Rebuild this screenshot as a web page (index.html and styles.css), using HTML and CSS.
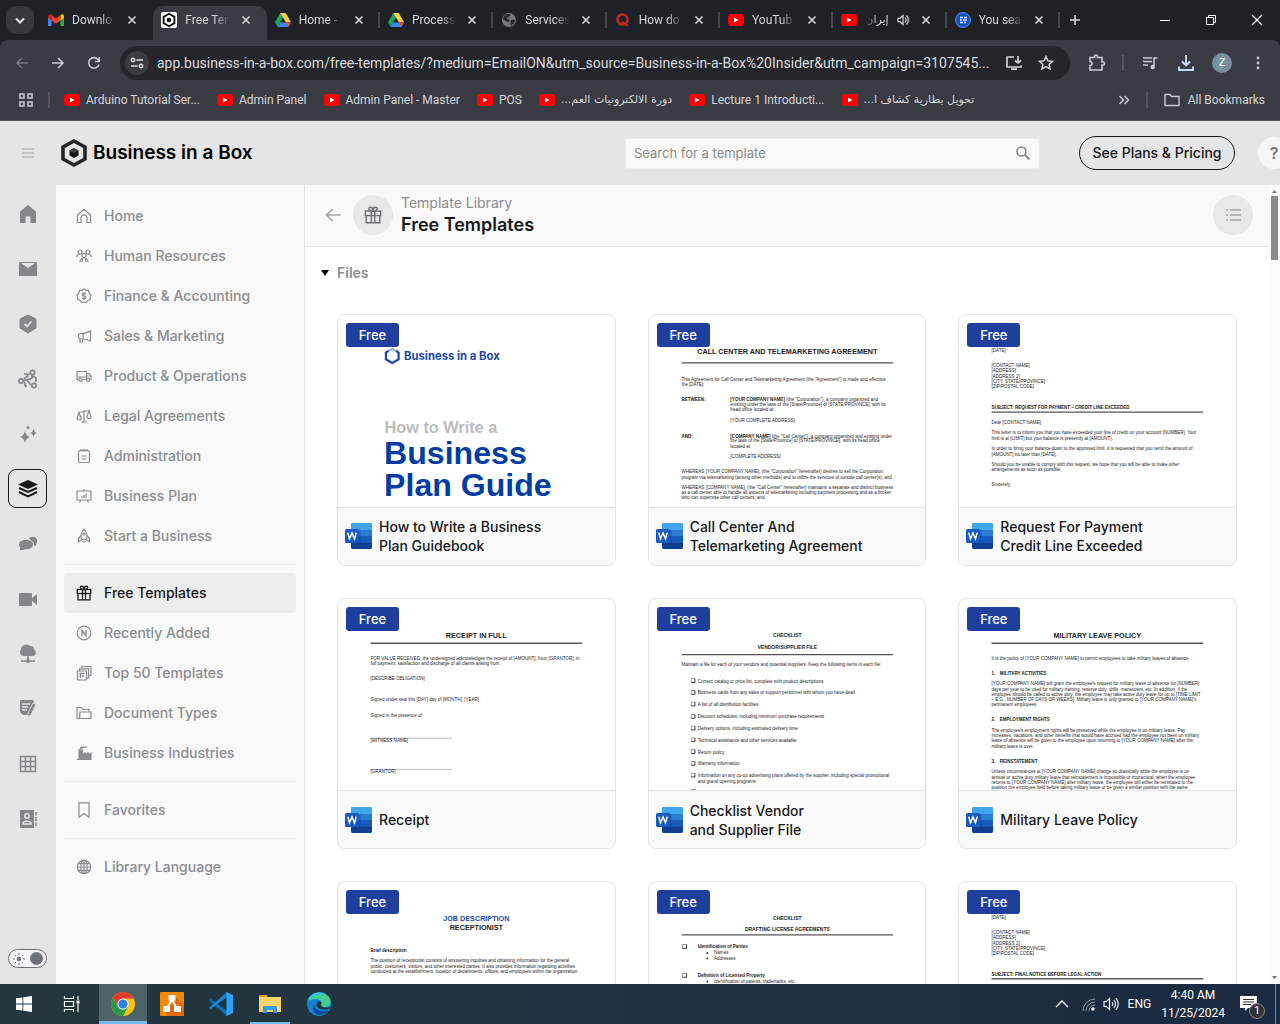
FILE: index.html
```html
<!DOCTYPE html>
<html lang="en">
<head>
<meta charset="utf-8">
<title>Free Templates</title>
<link rel="stylesheet" href="styles.css">
</head>
<body>
<svg class="sprite" aria-hidden="true">
  <symbol id="yt" viewBox="0 0 16 12"><rect width="16" height="12" rx="3" fill="#f00"/><path d="M6 3.500v5L10.500 6z" fill="#fff"/></symbol>
  <symbol id="drive" viewBox="0 0 16 14"><path d="M5.300 0h5.400L5.400 9 2.700 14 0 9.300z" fill="#1ea362"/><path d="M5.300 0h5.400L16 9.300h-5.300z" fill="#ffcd40"/><path d="M5.200 9.300H16L13.400 14H2.700z" fill="#4285f4"/><path d="M10.700 9.300H16L13.400 14z" fill="#ea4335"/><path d="M8 4.800 5.300 9.300h5.400z" fill="#1f2228"/></symbol>
  <symbol id="close" viewBox="0 0 10 10"><path d="m1.500 1.500 7 7m0-7-7 7" stroke="#d5d7db" stroke-width="1.600"/></symbol>
  <symbol id="gift" viewBox="0 0 16 16"><g fill="none" stroke="currentColor" stroke-width="1.300"><rect x="1.200" y="4.500" width="13.600" height="4"/><path d="M2 8.500v6.300h12V8.500M6.500 4.500v10.300m3-10.300v10.300M8 4.500C4 5 3.300 1.200 5.500 1.200 7.200 1.200 8 3 8 4.500 8 3 8.800 1.200 10.500 1.200c2.200 0 1.500 3.800-2.500 3.300z"/></g></symbol>
  <symbol id="word" viewBox="0 0 27 26"><rect x="6" width="21" height="26" rx="2" fill="#2b7cd3"/><path d="M8 0h17a2 2 0 0 1 2 2v5H6V2a2 2 0 0 1 2-2z" fill="#41a5ee"/><path d="M6 13h21v6.500H6z" fill="#185abd"/><path d="M6 19.500h21V24a2 2 0 0 1-2 2H8a2 2 0 0 1-2-2z" fill="#103f91"/><path d="M6 7h9.500v14.500H6z" fill="#0f3c85" opacity=".35"/><rect y="6" width="14" height="14" rx="1.500" fill="#185abd"/><path d="m2.700 9.600 1.800 6.200L7 10l2.500 5.800 1.800-6.200" fill="none" stroke="#fff" stroke-width="1.500"/></symbol>
  <symbol id="box" viewBox="0 0 9 9"><path d="M1 1h7v7H1z" fill="#fff" stroke="#333" stroke-width="1"/><path d="M1 8.200h7.200V1" fill="none" stroke="#333" stroke-width="1.600"/></symbol>
</svg>

<header class="browser">
  <div class="tabstrip">
    <button class="tab-search" aria-label="Search tabs"><svg width="10" height="7" viewBox="0 0 10 7"><path d="m1 1.500 4 4 4-4" fill="none" stroke="#e3e4e8" stroke-width="2"/></svg></button>
    <div class="tabs">
      <div class="tab"><svg width="16" height="12" viewBox="0 0 16 12"><path d="M0 1.500V12h3.600V5z" fill="#4285f4"/><path d="M16 1.500V12h-3.600V5z" fill="#34a853"/><path d="M0 1.500 1.500 0 3.600 1v5.500L0 4z" fill="#c5221f"/><path d="M16 1.500 14.500 0l-2.100 1v5.500L16 4z" fill="#fbbc04"/><path d="M3.600 1 8 4.400 12.400 1v5.400L8 9.700 3.600 6.400z" fill="#ea4335"/></svg><span class="tab-title">Downlo</span><button aria-label="Close tab"><svg width="10" height="10"><use href="#close"/></svg></button></div>
      <div class="tab active"><svg width="16" height="16" viewBox="0 0 16 16"><rect width="16" height="16" rx="2" fill="#fff"/><path d="m8 1.800 5.400 3.100v6.200L8 14.200l-5.400-3.100V4.900z" fill="none" stroke="#111" stroke-width="1.900"/><circle cx="8" cy="8" r="2.300"/></svg><span class="tab-title">Free Ten</span><button aria-label="Close tab"><svg width="10" height="10"><use href="#close"/></svg></button></div>
      <div class="tab plain"><svg width="16" height="14"><use href="#drive"/></svg><span class="tab-title">Home -</span><button aria-label="Close tab"><svg width="10" height="10"><use href="#close"/></svg></button></div>
      <div class="tab plain"><svg width="16" height="14"><use href="#drive"/></svg><span class="tab-title">Process</span><button aria-label="Close tab"><svg width="10" height="10"><use href="#close"/></svg></button></div>
      <div class="tab plain"><svg width="16" height="16" viewBox="0 0 16 16"><circle cx="8" cy="8" r="7" fill="#75777b"/><path d="M3 4c2-2 5-2.500 6-1.500S7 5 6 6s3 1 2.500 3S6 10 5 9 2 8 2 7zm7 4c2-1 3.500-.500 4 0s-.500 4-3 5-2-1-1.500-2 0-2 .500-3z" fill="#26292e"/></svg><span class="tab-title">Services</span><button aria-label="Close tab"><svg width="10" height="10"><use href="#close"/></svg></button></div>
      <div class="tab plain"><svg width="16" height="16" viewBox="0 0 16 16"><circle cx="7.500" cy="7.500" r="5" fill="none" stroke="#b92b27" stroke-width="2.600"/><path d="M7 10c2 0 3 4 6 3" fill="none" stroke="#b92b27" stroke-width="2"/></svg><span class="tab-title">How do</span><button aria-label="Close tab"><svg width="10" height="10"><use href="#close"/></svg></button></div>
      <div class="tab plain"><svg width="16" height="12"><use href="#yt"/></svg><span class="tab-title">YouTub</span><button aria-label="Close tab"><svg width="10" height="10"><use href="#close"/></svg></button></div>
      <div class="tab plain"><svg width="16" height="12"><use href="#yt"/></svg><span class="tab-title rtl" dir="rtl">إيران</span><svg width="13" height="12" viewBox="0 0 13 12"><path d="M1 4.300h2L6 1.500v9L3 7.700H1zM8 3.500q2 2.500 0 5M9.500 1.500q4 4.500 0 9" fill="none" stroke="#d5d7db" stroke-width="1.200"/></svg><button aria-label="Close tab"><svg width="10" height="10"><use href="#close"/></svg></button></div>
      <div class="tab plain"><svg width="16" height="16" viewBox="0 0 16 16"><circle cx="8" cy="8" r="7.500" fill="#1553b8" stroke="#4d8be0"/><path d="M5 5.500h3m1 0h3M5 8h2m1 0h4M5 10.500h3m1 0h2" stroke="#dfe9fa" stroke-width="1.600"/></svg><span class="tab-title">You sea</span><button aria-label="Close tab"><svg width="10" height="10"><use href="#close"/></svg></button></div>
    </div>
    <button class="new-tab" aria-label="New tab"><svg width="12" height="12"><path d="M6 1v10M1 6h10" stroke="#d5d7db" stroke-width="1.600"/></svg></button>
    <div class="window-controls">
      <button aria-label="Minimize"><svg width="12" height="12"><path d="M1 6.500h10" stroke="#fff"/></svg></button>
      <button aria-label="Restore"><svg width="12" height="12"><path d="M1.500 3.500h7v7h-7zM3.500 3.500v-2h7v7h-2" fill="none" stroke="#fff"/></svg></button>
      <button aria-label="Close window"><svg width="12" height="12"><path d="m1 1 10 10m0-10L1 11" stroke="#fff" stroke-width="1.200"/></svg></button>
    </div>
  </div>
  <div class="toolbar">
    <button aria-label="Back"><svg width="14" height="12"><path d="M13 6H2m5-5L2 6l5 5" fill="none" stroke="#75777d" stroke-width="1.600"/></svg></button>
    <button aria-label="Forward"><svg width="14" height="12"><path d="M1 6h11M7 1l5 5-5 5" fill="none" stroke="#c9cbd1" stroke-width="1.600"/></svg></button>
    <button aria-label="Reload"><svg width="14" height="14"><path d="M12 8.500A5.300 5.300 0 1 1 11 3.500l1.200 1.500M12.300 1v4.500H7.800" fill="none" stroke="#c9cbd1" stroke-width="1.600"/></svg></button>
    <div class="omnibox">
      <button class="site-info" aria-label="Site information"><svg width="14" height="12"><g fill="none" stroke="#dfe0e4" stroke-width="1.500"><circle cx="3" cy="3" r="1.700"/><path d="M6.500 3H13M1 9h6.500"/><circle cx="11" cy="9" r="1.700"/></g></svg></button>
      <input class="url" type="text" aria-label="Address" value="app.business-in-a-box.com/free-templates/?medium=EmailON&amp;utm_source=Business-in-a-Box%20Insider&amp;utm_campaign=3107545...">
      <button aria-label="Install app"><svg width="18" height="16"><path d="M9 2H2v10h14v-1.500M6 14.200h6M13 1v7m-3-2.500L13 8l3-2.500" fill="none" stroke="#cfd1d6" stroke-width="1.700"/></svg></button>
      <button aria-label="Bookmark this page"><svg width="16" height="16"><path d="m8 1.500 1.900 4.300 4.600.500-3.400 3.100 1 4.600L8 11.700 3.900 14l1-4.600L1.500 6.300l4.600-.500z" fill="none" stroke="#cfd1d6" stroke-width="1.500"/></svg></button>
    </div>
    <button class="extensions" aria-label="Extensions"><svg width="18" height="18"><path d="M2 3.500h4.500v-1a1.500 1.500 0 0 1 3 0v1H14V8h1a1.500 1.500 0 0 1 0 3h-1v5H2v-4.500a2 2 0 0 0 0-4z" fill="none" stroke="#c9cbd1" stroke-width="1.600"/></svg></button>
    <span class="rule"></span>
    <button aria-label="Media"><svg width="16" height="14"><path d="M1 2h9M1 5.500h9M1 9h5" stroke="#c9cbd1" stroke-width="1.600"/><path d="M12 11V2h3.500" fill="none" stroke="#c9cbd1" stroke-width="1.600"/><circle cx="10.600" cy="11" r="2.200" fill="#c9cbd1"/></svg></button>
    <button aria-label="Downloads"><svg width="18" height="18"><path d="M9 1v10M5 7.500l4 4 4-4M2 12.500V16h14v-3.500" fill="none" stroke="#c5dcff" stroke-width="1.900"/></svg></button>
    <button class="profile" aria-label="Profile"><span>Z</span></button>
    <button aria-label="Menu"><svg width="4" height="16"><g fill="#c9cbd1"><circle cx="2" cy="3" r="1.400"/><circle cx="2" cy="8" r="1.400"/><circle cx="2" cy="13" r="1.400"/></g></svg></button>
  </div>
  <nav class="bookmarks" aria-label="Bookmarks">
    <button class="apps" aria-label="Apps"><svg width="14" height="14"><path d="M1 1h4v4H1zM9 1h4v4H9zM1 9h4v4H1zM9 9h4v4H9z" fill="none" stroke="#c9cbd1" stroke-width="1.600"/></svg></button>
    <span class="rule"></span>
    <div class="bookmark-list">
      <a href="#"><svg width="16" height="12"><use href="#yt"/></svg>Arduino Tutorial Ser...</a>
      <a href="#"><svg width="16" height="12"><use href="#yt"/></svg>Admin Panel</a>
      <a href="#"><svg width="16" height="12"><use href="#yt"/></svg>Admin Panel - Master</a>
      <a href="#"><svg width="16" height="12"><use href="#yt"/></svg>POS</a>
      <a href="#"><svg width="16" height="12"><use href="#yt"/></svg><span class="rtl" dir="rtl">دورة الالكترونيات العم...</span></a>
      <a href="#"><svg width="16" height="12"><use href="#yt"/></svg>Lecture 1 Introducti...</a>
      <a href="#"><svg width="16" height="12"><use href="#yt"/></svg><span class="rtl" dir="rtl">تحويل بطارية كشاف ا...</span></a>
    </div>
    <button class="more" aria-label="More bookmarks"><svg width="12" height="10"><path d="m1.500 1 4 4-4 4m5-8 4 4-4 4" fill="none" stroke="#c9cbd1" stroke-width="1.500"/></svg></button>
    <span class="rule"></span>
    <a class="all" href="#"><svg width="16" height="14"><path d="M1 12.500v-11h5l1.500 2H15v9z" fill="none" stroke="#c9cbd1" stroke-width="1.400"/></svg>All Bookmarks</a>
  </nav>
</header>

<div class="topbar">
  <button class="burger" aria-label="Toggle menu"><svg width="12" height="12"><path d="M0 2h12M0 6h12M0 10h12" stroke="#bcbcbc" stroke-width="1.600"/></svg></button>
  <a class="brand" href="#"><svg width="28" height="30" viewBox="0 0 28 30"><path d="m14 3 11 6v12L14 27 3 21V9z" fill="none" stroke="#262626" stroke-width="3.600"/><path d="m14 10 4.500 2.500v5L14 20l-4.500-2.500v-5z" fill="#151515"/><path d="m14 10 4.500 2.500L14 15l-4.500-2.500z" fill="#444"/></svg>Business in a Box</a>
  <form class="search"><input type="text" aria-label="Search for a template" placeholder="Search for a template"><button type="button" aria-label="Search"><svg width="16" height="16"><circle cx="6.500" cy="6.500" r="4.500" fill="none" stroke="#858585" stroke-width="1.600"/><path d="m10 10 4.500 4.500" stroke="#858585" stroke-width="1.800"/></svg></button></form>
  <button class="plans">See Plans &amp; Pricing</button>
  <button class="help">?</button>
</div>

<div class="app">
  <nav class="rail" aria-label="Apps">
    <a href="#" aria-label="Home"><svg width="18" height="18"><path d="M9 0 1 6.500V18h5.500v-6.500h5V18H17V6.500z" fill="currentColor"/></svg></a>
    <a href="#" aria-label="Mail"><svg width="20" height="16"><path d="M1 1h18v14H1z" fill="currentColor"/><path d="m3 2 7 5 7-5z" fill="#e5e5e5"/></svg></a>
    <a href="#" aria-label="Tasks"><svg width="18" height="20"><path d="m9 1 8 4v9l-8 5-8-5V5z" fill="currentColor" stroke="currentColor" stroke-linejoin="round"/><path d="m5.500 10 2.500 2.500 4.500-5" fill="none" stroke="#e5e5e5" stroke-width="1.800"/></svg></a>
    <a href="#" aria-label="Workflows"><svg width="20" height="20"><g fill="none" stroke="currentColor" stroke-width="1.700"><circle cx="14.500" cy="3.500" r="2.200"/><circle cx="3" cy="12" r="2.200"/><circle cx="16" cy="16.500" r="2.200"/><path d="M12 5Q9 6 6 4.500M10 6.500q-1 2-4 3M5.500 12q3-2 5 1t3.500 3M18 13V9l-3-2M7 13q-1 3 1.500 5M14 6v3q-3 2-5 1"/></g></svg></a>
    <a href="#" aria-label="AI"><svg width="18" height="18"><path d="M6 6q1 5 5 6-4 1-5 6-1-5-5-6 4-1 5-6zM14.500 4q.500 3 3.500 4-3 .500-3.500 4-.500-3.500-3.500-4 3-1 3.500-4zM9 0q.300 2 2 2.500Q9.300 3 9 5q-.300-2-2-2.500Q8.700 2 9 0z" fill="currentColor"/></svg></a>
    <a class="current" href="#" aria-label="Templates"><svg width="20" height="18"><path d="m10 0 10 4.500L10 9 0 4.500z" fill="currentColor"/><path d="m1 8 9 4 9-4M1 12l9 4.300 9-4.300" fill="none" stroke="currentColor" stroke-width="2"/></svg></a>
    <a href="#" aria-label="Chat"><svg width="20" height="16"><path d="M11 2c5-3 9 0 8 4-.300 1.200-1 2-1 4l-3-1z" fill="currentColor"/><ellipse cx="8" cy="8.500" rx="7.500" ry="5.300" fill="currentColor" stroke="#e5e5e5"/><path d="M2 10v4.500l5-1z" fill="currentColor"/></svg></a>
    <a href="#" aria-label="Meetings"><svg width="20" height="14"><rect y="1" x="1" width="13" height="13" rx="1" fill="currentColor"/><path d="m13 7 6-5v11l-6-5z" fill="currentColor"/></svg></a>
    <a href="#" aria-label="Drive"><svg width="18" height="20"><path d="M4 12a4 4 0 0 1-2-6.500C2.500 0 9 0 11 2c3 0 4 1 4 3.500 3 1.500 2 6.500-1.500 6.500z" fill="currentColor"/><path d="M9 11v6M2 17h14" stroke="currentColor" stroke-width="1.700"/><circle cx="9" cy="17" r="2" fill="currentColor"/></svg></a>
    <a href="#" aria-label="Documents"><svg width="18" height="20"><path d="M1 1h13l1 2-5 13H4l-3-3z" fill="currentColor"/><path d="M3 5h8M3 8h6M3 11h5" stroke="#e5e5e5" stroke-width="1.300"/><path d="m14 4-5 10v4l3-2 5-11z" fill="currentColor" stroke="#e5e5e5" stroke-width=".8"/></svg></a>
    <a href="#" aria-label="Sheets"><svg width="18" height="18"><path d="M1.500 1.500h15v15h-15zM6.500 1.500v15m5-15v15M1.500 6.500h15m-15 5h15" fill="none" stroke="currentColor" stroke-width="1.500"/></svg></a>
    <a href="#" aria-label="Contacts"><svg width="18" height="18"><path d="M1 0h14v18H1z" fill="currentColor"/><circle cx="8" cy="6" r="2.200" fill="none" stroke="#e5e5e5" stroke-width="1.500"/><path d="M4 14v-1.500q4-3 8 0V14z" fill="none" stroke="#e5e5e5" stroke-width="1.500"/><path d="M17 2v3.500M17 7v4m0 1.500V16" stroke="currentColor" stroke-width="1.500"/></svg></a>
    <button class="theme" aria-label="Theme"><svg width="12" height="12"><circle cx="6" cy="6" r="2.300" fill="#6d7278"/><path d="M6 0v2m0 8v2M0 6h2m8 0h2M2 2l1 1m6 6 1 1M2 10l1-1m6-6 1-1" stroke="#6d7278"/></svg><span></span></button>
  </nav>

  <nav class="sidebar" aria-label="Template categories">
    <a href="#"><svg width="16" height="16"><path d="M1.500 7 8 1.300 14.500 7v7.500H11V9.800a3 3 0 0 0-6 0v4.700H1.500z"/></svg>Home</a>
    <a href="#"><svg width="16" height="16"><circle cx="4" cy="4" r="2"/><circle cx="12" cy="4" r="2"/><circle cx="8" cy="7.500" r="2.200"/><path d="M.8 9q0-2.500 3-3M15.200 9q0-2.500-3-3M4 14q.500-4 4-4.300 3.500.300 4 4.300M6.500 11 6 14m3.500-3 .500 3"/></svg>Human Resources</a>
    <a href="#"><svg width="16" height="16"><path d="m8 .9 2 1.400 2.500.200.500 2.400L15 7l-.900 2.200L14 11.500l-2.200 1L10 14.600l-2-.6-2 .6-1.800-2.100-2.300-1-.100-2.300L1 7l2-2.100.500-2.400L6 2.300z"/><path d="M10 6Q9.500 5 8 5 6 5 6 6.400q0 1.300 2 1.400t2 1.500q0 1.500-2 1.500-1.600 0-2-1.200M8 4v8"/></svg>Finance &amp; Accounting</a>
    <a href="#"><svg width="16" height="16"><path d="M14.500 2v11.500M14.500 2.500Q11 5.500 6 5.500H4a3 3 0 0 0 0 5.500h2q5 0 8.500 2.300M7 5.500V11M4 11v3h2.500l.300-2.700"/></svg>Sales &amp; Marketing</a>
    <a href="#"><svg width="16" height="16"><path d="M3 11.500H1v-8h9.500v8H6M10.500 5.500H13L15 8v3.500h-1M10.500 8H15M1 9h9"/><circle cx="4.500" cy="11.800" r="1.600"/><circle cx="12" cy="11.800" r="1.600"/></svg>Product &amp; Operations</a>
    <a href="#"><svg width="16" height="16"><path d="M8 2v12M5 14h6M3 4.500 8 3.500l5-1M3 4.500.900 10.500a2.300 2.300 0 0 0 4.300 0zM13 2.800 10.800 9a2.300 2.300 0 0 0 4.300 0z"/></svg>Legal Agreements</a>
    <a href="#"><svg width="16" height="16"><rect x="2.500" y="2.500" width="11" height="12" rx="1.500"/><path d="M5 1v2.500M7 1v2.500M9 1v2.500m2-2.500v2.500M5.500 8h5m-5 3h5"/></svg>Administration</a>
    <a href="#"><svg width="16" height="16"><path d="M1 3h14v9H1zM8 1v2M5 12l-1.500 2.500M11 12l1.500 2.500M6 10V8m2 2V7m2 3V5.500"/></svg>Business Plan</a>
    <a href="#"><svg width="16" height="16"><path d="M5.500 11.500Q4 5 8 1.200 12 5 10.500 11.500zM5 7.500 2.500 10.500V14L5.500 12m5.500-4.500 2.500 3V14l-3-2M8 13v2m-1.500-2v1m3-1v1"/><circle cx="8" cy="6" r="1"/></svg>Start a Business</a>
    <hr>
    <a class="selected" href="#"><svg width="16" height="16"><use href="#gift"/></svg>Free Templates</a>
    <a href="#"><svg width="16" height="16"><circle cx="8" cy="8" r="6.800"/><path d="M6 11V5.500l4 5V5" stroke-width="1.500"/></svg>Recently Added</a>
    <a href="#"><svg width="16" height="16"><path d="M1.500 6h9v9h-9zM3.500 6V3.800h9.200v9h-2M6 3.500V1.500h9v9h-2"/><path d="M3.500 8.500h5M4.500 9v4M6 11h2" stroke-width="1.600"/></svg>Top 50 Templates</a>
    <a href="#"><svg width="16" height="16"><path d="M3.500 13.500H1v-11h4.500l1.500 2h6V7M4 7h11v6.500H3.500z"/></svg>Document Types</a>
    <a href="#"><svg width="16" height="16"><path d="M1 14.500h14V8l-3 2V8L9 10V8L6.500 9.500V5H3v9zM4 4.500Q4 2 7 2h4" fill="currentColor"/></svg>Business Industries</a>
    <hr>
    <a href="#"><svg width="16" height="16"><path d="M3 .8h10v14.500L8 11.500l-5 3.800z"/></svg>Favorites</a>
    <hr>
    <a href="#"><svg width="16" height="16"><circle cx="8" cy="8" r="6.700"/><ellipse cx="8" cy="8" rx="3.200" ry="6.700"/><path d="M8 1.300v13.400M1.300 8h13.400M2.300 4.700h11.400M2.300 11.300h11.400"/></svg>Library Language</a>
  </nav>

  <main class="content">
    <div class="page-head">
      <button class="back" aria-label="Back"><svg width="16" height="14"><path d="M15.500 7H1.500m6-6-6 6 6 6" fill="none" stroke="#a3a3a3" stroke-width="1.600"/></svg></button>
      <span class="round"><svg width="18" height="18"><use href="#gift"/></svg></span>
      <div class="titles"><p>Template Library</p><h1>Free Templates</h1></div>
      <button class="round view" aria-label="List view"><svg width="16" height="14"><path d="M5 2h11M5 7h11M5 12h11M1 2h2M1 7h2m-2 5h2" stroke="#a3a3a3" stroke-width="1.500"/></svg></button>
    </div>
    <details class="files" open>
      <summary><svg width="8" height="6"><path d="M0 0h8L4 6z"/></svg>Files</summary>
      <div class="cards">
        <article class="card">
          <svg class="preview" viewBox="0 0 612 424"><path d="M112 79 106 83v15l14 8 14-8V83l-6-4" fill="none" stroke="#1d4aa5" stroke-width="5"/><path d="m112 79 8-4 8 4" fill="none" stroke="#9db8e0" stroke-width="5"/><g font-weight="bold" fill="#003da5"><text class="wordmark" x="146" y="99">Business in a Box</text><text x="103" y="260" font-size="36" fill="#bdbdbd">How to Write a</text><text x="102" y="329" font-size="71">Business</text><text x="102" y="401" font-size="71">Plan Guide</text></g></svg>
          <span class="badge">Free</span>
          <a class="caption" href="#"><svg width="27" height="26"><use href="#word"/></svg><span>How to Write a Business<br>Plan Guidebook</span></a>
        </article>
        <article class="card">
          <svg class="preview" viewBox="0 0 612 424"><text class="title" x="306" y="86">CALL CENTER AND TELEMARKETING AGREEMENT</text><path class="line" d="M72 106h468"/>
            <text x="72" y="145">This Agreement for Call Center and Telemarketing Agreement (the "Agreement") is made and effective</text><text x="72" y="156">the [DATE]</text>
            <text class="b" x="72" y="190">BETWEEN:</text><text x="180" y="190"><tspan class="b">[YOUR COMPANY NAME]</tspan> (the "Corporation"), a company organized and</text><text x="180" y="202">existing under the laws of the [State/Province] of [STATE/PROVINCE], with its</text><text x="180" y="213">head office located at:</text><text x="180" y="236">[YOUR COMPLETE ADDRESS]</text>
            <text class="b" x="72" y="271">AND:</text><text x="180" y="271"><tspan class="b">[COMPANY NAME]</tspan> (the "Call Center"), a company organized and existing under</text><text x="180" y="282">the laws of the [State/Province] of [STATE/PROVINCE], with its head office</text><text x="180" y="294">located at:</text><text x="180" y="316">[COMPLETE ADDRESS]</text>
            <text x="72" y="350">WHEREAS [YOUR COMPANY NAME], (the "Corporation" hereinafter) desires to sell the Corporation</text><text x="72" y="362">program via telemarketing (among other methods) and to utilize the services of outside call center(s); and</text>
            <text x="72" y="385">WHEREAS [COMPANY NAME], (the "Call Center" hereinafter) maintains a separate and distinct business</text><text x="72" y="397">as a call center able to handle all aspects of telemarketing including payment processing and as a broker</text><text x="72" y="408">who can supervise other call centers; and</text></svg>
          <span class="badge">Free</span>
          <a class="caption" href="#"><svg width="27" height="26"><use href="#word"/></svg><span>Call Center And<br>Telemarketing Agreement</span></a>
        </article>
        <article class="card">
          <svg class="preview" viewBox="0 0 612 424"><text x="72" y="81">[DATE]</text><text x="72" y="116">[CONTACT NAME]</text><text x="72" y="127">[ADDRESS]</text><text x="72" y="139">[ADDRESS 2]</text><text x="72" y="150">[CITY, STATE/PROVINCE]</text><text x="72" y="162">[ZIP/POSTAL CODE]</text>
            <text class="b" x="72" y="207">SUBJECT: REQUEST FOR PAYMENT – CREDIT LINE EXCEEDED</text><path class="line" d="M72 215h468"/>
            <text x="72" y="241">Dear [CONTACT NAME],</text><text x="72" y="264">This letter is to inform you that you have exceeded your line of credit on your account [NUMBER]. Your</text><text x="72" y="276">limit is at [LIMIT] but your balance is presently at [AMOUNT].</text>
            <text x="72" y="299">In order to bring your balance down to the approved limit, it is requested that you remit the amount of</text><text x="72" y="311">[AMOUNT] no later than [DATE].</text>
            <text x="72" y="333">Should you be unable to comply with this request, we hope that you will be able to make other</text><text x="72" y="345">arrangements as soon as possible.</text><text x="72" y="379">Sincerely,</text></svg>
          <span class="badge">Free</span>
          <a class="caption" href="#"><svg width="27" height="26"><use href="#word"/></svg><span>Request For Payment<br>Credit Line Exceeded</span></a>
        </article>
        <article class="card">
          <svg class="preview" viewBox="0 0 612 424"><text class="title" x="306" y="87">RECEIPT IN FULL</text><path class="line" d="M72 98h468"/>
            <text x="72" y="134">FOR VALUE RECEIVED, the undersigned acknowledges the receipt of [AMOUNT], from [GRANTOR], in</text><text x="72" y="146">full payment, satisfaction and discharge of all claims arising from:</text><text x="72" y="180">[DESCRIBE OBLIGATION]</text><text x="72" y="226">Signed under seal this [DAY] day of [MONTH], [YEAR].</text><text x="72" y="260">Signed in the presence of:</text>
            <path class="sign" d="M72 308h180M72 377h180"/><text x="72" y="317">[WITNESS NAME]</text><text x="72" y="386">[GRANTOR]</text></svg>
          <span class="badge">Free</span>
          <a class="caption" href="#"><svg width="27" height="26"><use href="#word"/></svg><span>Receipt</span></a>
        </article>
        <article class="card">
          <svg class="preview" viewBox="0 0 612 424"><text class="subtitle" x="306" y="83">CHECKLIST</text><text class="subtitle" x="306" y="110">VENDOR/SUPPLIER FILE</text><path class="line" d="M72 123h468"/>
            <text x="72" y="148">Maintain a file for each of your vendors and potential suppliers. Keep the following items in each file:</text>
            <g><use href="#box" x="92" y="175" width="11" height="11"/><use href="#box" x="92" y="201" width="11" height="11"/><use href="#box" x="92" y="227" width="11" height="11"/><use href="#box" x="92" y="254" width="11" height="11"/><use href="#box" x="92" y="280" width="11" height="11"/><use href="#box" x="92" y="306" width="11" height="11"/><use href="#box" x="92" y="332" width="11" height="11"/><use href="#box" x="92" y="358" width="11" height="11"/><use href="#box" x="92" y="384" width="11" height="11"/><use href="#box" x="92" y="420" width="11" height="11"/></g>
            <text x="108" y="185">Current catalog or price list, complete with product descriptions</text><text x="108" y="211">Business cards from any sales or support personnel with whom you have dealt</text><text x="108" y="237">A list of all distribution facilities</text><text x="108" y="263">Discount schedules, including minimum purchase requirements</text><text x="108" y="290">Delivery options, including estimated delivery time</text><text x="108" y="316">Technical assistance and other services available</text><text x="108" y="342">Return policy</text><text x="108" y="368">Warranty information</text><text x="108" y="394">Information on any co-op advertising plans offered by the supplier, including special promotional</text><text x="108" y="406">and grand opening programs</text></svg>
          <span class="badge">Free</span>
          <a class="caption" href="#"><svg width="27" height="26"><use href="#word"/></svg><span>Checklist Vendor<br>and Supplier File</span></a>
        </article>
        <article class="card">
          <svg class="preview" viewBox="0 0 612 424"><text class="title" x="306" y="87">MILITARY LEAVE POLICY</text><path class="line" d="M72 98h468"/>
            <text x="72" y="134">It is the policy of [YOUR COMPANY NAME] to permit employees to take military leaves of absence.</text>
            <text class="b" x="72" y="169">1.</text><text class="b" x="90" y="169">MILITARY ACTIVITIES</text>
            <text x="72" y="191">[YOUR COMPANY NAME] will grant the employee's request for military leave of absence for [NUMBER]</text><text x="72" y="203">days per year to be used for military training, reserve duty, drills, maneuvers, etc. In addition, if the</text><text x="72" y="214">employee should be called to active duty, the employee may take active duty leave for up to [TIME LIMIT</text><text x="72" y="226">– E.G., NUMBER OF DAYS OR WEEKS]. Military leave is only granted to [YOUR COMPANY NAME]'s</text><text x="72" y="237">permanent employees.</text>
            <text class="b" x="72" y="271">2.</text><text class="b" x="90" y="271">EMPLOYMENT RIGHTS</text>
            <text x="72" y="294">The employee's employment rights will be preserved while the employee is on military leave. Pay</text><text x="72" y="306">increases, vacations, and other benefits that would have accrued had the employee not been on military</text><text x="72" y="317">leave of absence will be given to the employee upon returning to [YOUR COMPANY NAME] after the</text><text x="72" y="329">military leave is over.</text>
            <text class="b" x="72" y="363">3.</text><text class="b" x="90" y="363">REINSTATEMENT</text>
            <text x="72" y="386">Unless circumstances at [YOUR COMPANY NAME] change so drastically while the employee is on</text><text x="72" y="398">annual or active duty military leave that reinstatement is impossible or impractical, when the employee</text><text x="72" y="409">returns to [YOUR COMPANY NAME] after military leave, the employee will either be reinstated to the</text><text x="72" y="420">position the employee held before taking military leave or be given a similar position with the same</text></svg>
          <span class="badge">Free</span>
          <a class="caption" href="#"><svg width="27" height="26"><use href="#word"/></svg><span>Military Leave Policy</span></a>
        </article>
        <article class="card">
          <svg class="preview" viewBox="0 0 612 424"><text class="title blue" x="306" y="87">JOB DESCRIPTION</text><text class="title" x="306" y="107">RECEPTIONIST</text>
            <text class="b" x="72" y="154">Brief description</text><text x="72" y="178">The position of receptionist consists of answering inquiries and obtaining information for the general</text><text x="72" y="190">public, customers, visitors, and other interested parties. It also provides information regarding activities</text><text x="72" y="201">conducted at the establishment, location of departments, offices, and employees within the organization.</text></svg>
          <span class="badge">Free</span>
          <a class="caption" href="#"><svg width="27" height="26"><use href="#word"/></svg><span>Receptionist</span></a>
        </article>
        <article class="card">
          <svg class="preview" viewBox="0 0 612 424"><text class="subtitle" x="306" y="83">CHECKLIST</text><text class="subtitle" x="306" y="108">DRAFTING LICENSE AGREEMENTS</text><path class="line" d="M72 117h468"/>
            <use href="#box" x="73" y="137" width="11" height="11"/><text class="b" x="108" y="147">Identification of Parties</text><circle cx="129" cy="157" r="2"/><text x="144" y="160">Names</text><circle cx="129" cy="169" r="2"/><text x="144" y="172">Addresses</text>
            <use href="#box" x="73" y="201" width="11" height="11"/><text class="b" x="108" y="211">Definition of Licensed Property</text><circle cx="129" cy="220" r="2"/><text x="144" y="223">Identification of patents, trademarks, etc.</text></svg>
          <span class="badge">Free</span>
          <a class="caption" href="#"><svg width="27" height="26"><use href="#word"/></svg><span>Checklist Drafting<br>License Agreements</span></a>
        </article>
        <article class="card">
          <svg class="preview" viewBox="0 0 612 424"><text x="72" y="81">[DATE]</text><text x="72" y="116">[CONTACT NAME]</text><text x="72" y="127">[ADDRESS]</text><text x="72" y="139">[ADDRESS 2]</text><text x="72" y="150">[CITY, STATE/PROVINCE]</text><text x="72" y="162">[ZIP/POSTAL CODE]</text><text class="b" x="72" y="207">SUBJECT: FINAL NOTICE BEFORE LEGAL ACTION</text><path class="line" d="M72 214h468"/></svg>
          <span class="badge">Free</span>
          <a class="caption" href="#"><svg width="27" height="26"><use href="#word"/></svg><span>Final Notice Before<br>Legal Action</span></a>
        </article>
      </div>
    </details>
  </main>
  <div class="scroll"><svg width="5" height="3"><path d="M0 3h5L2.500 0z"/></svg><span></span><svg width="5" height="3"><path d="M0 0h5L2.500 3z"/></svg></div>
</div>

<footer class="taskbar">
  <button aria-label="Start"><svg width="16" height="16" viewBox="0 0 16 16"><path d="m0 2.300 6.500-.900v6.100H0zM7.300 1.300 16 0v7.500H7.300zM0 8.400h6.500v6.200L0 13.700zM7.300 8.400H16V16l-8.700-1.300z" fill="#fff"/></svg></button>
  <button aria-label="Task view"><svg width="18" height="16"><path d="M1.500 0v2.500h9V0M1.500 16v-2.500h9V16M1.500 5.500h9v5h-9zM15 0v4m0 4v8" fill="none" stroke="#fff" stroke-width="1.200"/><path d="M13.500 4.500h3v3h-3z" fill="#fff"/></svg></button>
  <div class="pinned">
    <button class="focused" aria-label="Chrome"><svg width="24" height="24" viewBox="0 0 24 24"><circle cx="12" cy="12" r="12" fill="#fbc116"/><path d="M1.600 6A12 12 0 0 1 22.400 6L22.400 6.500H12L7.200 14.800z" fill="#e33b2e"/><path d="M1.600 6A12 12 0 0 0 12 24l5-9-9.800-.200z" fill="#279b48"/><circle cx="12" cy="12" r="5.600" fill="#fff"/><circle cx="12" cy="12" r="4.500" fill="#2a7de9"/></svg></button>
    <button aria-label="draw.io"><svg width="24" height="24"><rect width="24" height="24" rx="1" fill="#f08705"/><path d="m15 4 9 9v11H8l-3-5z" fill="#df6c0c"/><path d="m12 8-5 8m5-8 5 8" stroke="#fff" stroke-width="2"/><g fill="#fff"><rect x="8.500" y="3" width="7" height="6" rx="1"/><rect x="3" y="14" width="7" height="6" rx="1"/><rect x="14" y="14" width="7" height="6" rx="1"/></g></svg></button>
    <button aria-label="VS Code"><svg width="24" height="24"><path d="M0 8.500 1.800 7 18 19v5z" fill="#0a74c0"/><path d="M0 15.500 1.800 17 18 5V0z" fill="#1583d3"/><path d="m17.500 0 6.500 3v18l-6.500 3z" fill="#2aa5f5"/></svg></button>
    <button class="running" aria-label="File Explorer"><svg width="22" height="20"><path d="M0 1h8l1 3H0z" fill="#d99e12"/><path d="M0 3h22v15H0z" fill="#fbd368"/><path d="M4 19v-7h14v7h-4v-3H8v3z" fill="#3b9be0"/></svg></button>
    <button aria-label="Edge"><svg width="24" height="24"><circle cx="12" cy="12" r="12" fill="#1583cf"/><path d="M1 9C3 1 14-3 21 4c4 4 3 10-1 11-3 1-6 0-6-2 2-3-1-6-5-6S2 8 1 9z" fill="#42cf8f"/><path d="M.500 9C3 1 14-2 19 3 12 1 4 4 .500 9z" fill="#3cc3e8"/><path d="M8 12c-1 6 6 9 14 6-4 6-12 7-15 2-2-3-1-6 1-8z" fill="#0c4f9e"/><path d="M10 11c-2 4 3 8 12 6l1-2c-5 1-9 0-9-2 0-1 1-1 0-3-1-1-3-1-4 1z" fill="#22343f"/></svg></button>
  </div>
  <div class="tray">
    <button aria-label="Hidden icons"><svg width="14" height="8"><path d="m1 7 6-6 6 6" fill="none" stroke="#fff" stroke-width="1.400"/></svg></button>
    <svg width="13" height="13"><path d="M1 13A12 12 0 0 1 13 1M4 13a9 9 0 0 1 9-9M7 13a6 6 0 0 1 6-6" fill="none" stroke="#8f9aa3"/><circle cx="11" cy="11" r="1.800" fill="#fff"/></svg>
    <svg width="17" height="14"><path d="M1 4.500h2.500l3-3v11l-3-3H1zM9 5q1.500 2 0 4m2-6q3 4 0 8m2-10q4.500 6 0 12" fill="none" stroke="#fff" stroke-width="1.100"/></svg>
    <span>ENG</span>
    <time>4:40 AM<br>11/25/2024</time>
    <button class="notice" aria-label="Notifications"><svg width="18" height="16"><path d="M0 0h17v12H8l-3 3v-3H0z" fill="#fff"/><path d="M3 3.500h11M3 6h11M3 8.500h8" stroke="#22303f"/></svg><span>1</span></button>
    <span class="desktop"></span>
  </div>
</footer>
</body>
</html>
```
FILE: styles.css
```css
* { box-sizing: border-box; }
body {
  margin: 0;
  height: 100vh;
  display: flex;
  flex-direction: column;
  overflow: hidden;
  font: 14px/20px Inter, "Liberation Sans", sans-serif;
  color: #17181a;
  background: #e5e5e5;
}
.sprite { display: none; }
svg { flex: none; }
a { color: inherit; text-decoration: none; }
button {
  display: flex;
  align-items: center;
  justify-content: center;
  padding: 0;
  border: 0;
  background: none;
  font: inherit;
  color: inherit;
}

/* browser window */
.browser {
  flex: none;
  background: #1e2227;
  font: 12px/16px Roboto, "DejaVu Sans", sans-serif;
  color: #d5d7db;
}
.rtl { font-family: "DejaVu Sans", sans-serif; font-size: 11px; }
.tabstrip { display: flex; height: 40px; padding-left: 6px; }
.tab-search { width: 28px; height: 28px; margin: 6px 6px 0 0; border-radius: 9px; background: #36383e; }
.tabs { display: flex; flex: 1; min-width: 0; }
.tab {
  flex: 1;
  min-width: 0;
  display: flex;
  align-items: center;
  gap: 8px;
  margin-top: 6px;
  padding: 0 13px 6px 8px;
}
.tab.active { background: #3a3b43; border-radius: 10px 10px 0 0; }
.tab.plain { background: linear-gradient(#45474d, #45474d) right 6px / 2px 16px no-repeat; }
.tab-title {
  flex: 1;
  min-width: 0;
  white-space: nowrap;
  -webkit-mask-image: linear-gradient(90deg, #000 65%, transparent);
  mask-image: linear-gradient(90deg, #000 65%, transparent);
}
.tab-title.rtl {
  -webkit-mask-image: linear-gradient(270deg, #000 50%, transparent);
  mask-image: linear-gradient(270deg, #000 50%, transparent);
}
.tab button { width: 16px; height: 16px; }
.new-tab { width: 30px; height: 40px; margin-right: 52px; }
.window-controls { display: flex; }
.window-controls button { width: 46px; height: 40px; }

.toolbar {
  display: flex;
  align-items: center;
  height: 46px;
  padding: 0 4px;
  background: #3a3b43;
  border-radius: 8px 8px 0 0;
}
.toolbar button { width: 36px; height: 34px; }
.omnibox {
  flex: 1;
  min-width: 0;
  display: flex;
  align-items: center;
  height: 34px;
  margin-left: 8px;
  padding: 0 8px 0 5px;
  border-radius: 17px;
  background: #24262c;
}
.omnibox button { width: 32px; }
.omnibox .site-info { width: 24px; height: 24px; border-radius: 50%; background: #3a3b43; }
.url {
  flex: 1;
  min-width: 0;
  padding: 0 0 0 8px;
  border: 0;
  background: none;
  color: #d9dade;
  font: 14px/20px Roboto, sans-serif;
}
.toolbar .extensions { margin-left: 9px; }
.rule { width: 2px; height: 16px; margin: 0 8px 0 7px; background: #54565d; }
.profile span {
  width: 20px;
  height: 20px;
  border-radius: 50%;
  background: #78909c;
  color: #fff;
  font-size: 11px;
  line-height: 20px;
}

.bookmarks {
  display: flex;
  align-items: center;
  height: 35px;
  padding: 0 15px 7px 19px;
  background: #3a3b43;
  border-bottom: 1px solid #55565c;
}
.apps { width: 14px; margin-right: 8px; }
.bookmark-list { flex: 1; min-width: 0; display: flex; gap: 17px; margin-left: 6px; }
.bookmarks a { display: flex; align-items: center; gap: 6px; white-space: nowrap; }
.more { margin-right: 9px; }
.bookmarks .all { gap: 8px; margin-left: 8px; }

/* application header */
.topbar { flex: none; display: flex; align-items: center; height: 64px; overflow: hidden; }
.burger { width: 56px; height: 40px; }
.brand {
  display: flex;
  align-items: center;
  gap: 5px;
  margin-left: 4px;
  font-size: 19px;
  font-weight: 600;
  line-height: 24px;
  color: #000;
}
.search {
  display: flex;
  width: 415px;
  height: 31px;
  margin: 0 39px 0 auto;
  padding: 0 8px;
  border: 1px solid #ececec;
  border-radius: 3px;
  background: #f9f9f9;
}
.search input { flex: 1; min-width: 0; padding: 0; border: 0; background: none; font: 13px/20px Inter, sans-serif; }
.search input::placeholder { color: #8a8a8a; }
.plans {
  width: 156px;
  height: 34px;
  margin-right: 23px;
  border: 1px solid #17181a;
  border-radius: 17px;
  font-weight: 500;
}
.help { width: 32px; height: 32px; margin-right: -10px; border-radius: 50%; background: #f5f5f5; color: #777; font-size: 16px; font-weight: 600; }

/* application body */
.app { flex: 1; min-height: 0; display: flex; overflow: hidden; background: #fff; }
.rail {
  flex: none;
  width: 56px;
  display: flex;
  flex-direction: column;
  align-items: center;
  padding: 1px 1px 16px 0;
  background: #e5e5e5;
  color: #85868a;
}
.rail a { display: flex; align-items: center; justify-content: center; width: 39px; height: 39px; margin: 8px 0; }
.rail .current { border: 1px solid #17181a; border-radius: 8px; color: #17181a; }
.theme {
  width: 39px;
  height: 19px;
  gap: 5px;
  margin-top: auto;
  border: 1px solid #6d7278;
  border-radius: 10px;
  background: #f5f5f5;
}
.theme span { width: 13px; height: 13px; border-radius: 50%; background: #6d7278; }

.sidebar {
  flex: none;
  width: 249px;
  padding: 11px 8px;
  border-right: 1px solid #e3e3e3;
  background: #f9f9f9;
  font-weight: 500;
  color: #8b8c90;
}
.sidebar a { display: flex; align-items: center; gap: 12px; height: 40px; padding: 0 12px; border-radius: 4px; }
.sidebar svg { fill: none; stroke: currentColor; stroke-width: 1.2; }
.sidebar .selected { background: #ededed; color: #17181a; }
.sidebar hr { margin: 8px 0; border: 0; border-top: 1px solid #ededed; }

.content { flex: 1; min-width: 0; overflow: hidden; }
.page-head {
  display: flex;
  align-items: center;
  height: 62px;
  padding: 0 16px 1px 20px;
  border-bottom: 1px solid #e3e3e3;
  background: #f9f9f9;
}
.back { margin-right: 12px; }
.round {
  display: flex;
  align-items: center;
  justify-content: center;
  width: 40px;
  height: 40px;
  border-radius: 50%;
  background: #e8e8e8;
  color: #6d7278;
}
.view { margin-left: auto; }
.titles { margin-left: 8px; }
.titles p { margin: 0; color: #8b8c90; }
.titles h1 { margin: 0; font-size: 18px; font-weight: 600; line-height: 24px; }
.files summary {
  display: flex;
  align-items: center;
  gap: 8px;
  padding: 16px;
  color: #8b8c90;
  font-weight: 600;
}
.cards {
  display: grid;
  grid-template-columns: repeat(3, 1fr);
  gap: 32px;
  padding: 15px 32px 32px;
}
.card {
  position: relative;
  min-width: 0;
  border: 1px solid #e3e3e3;
  border-radius: 8px;
  overflow: hidden;
}
.preview { display: block; width: 100%; fill: #222; font: 10px "Liberation Sans", Arial, sans-serif; }
.preview .b { font-weight: bold; }
.preview .title { font-size: 16px; font-weight: bold; text-anchor: middle; }
.preview .subtitle { font-size: 11px; font-weight: bold; text-anchor: middle; }
.preview .wordmark { font-family: Inter, sans-serif; font-size: 25px; fill: #1d4aa5; }
.preview .blue { fill: #1d4aa5; }
.line { stroke: #555; stroke-width: 3; }
.sign { stroke: #666; stroke-width: 1; }
.badge {
  position: absolute;
  top: 8px;
  left: 8px;
  width: 53px;
  border-radius: 3px;
  background: #1f3f9f;
  color: #fff;
  font-size: 13px;
  font-weight: 500;
  line-height: 24px;
  text-align: center;
}
.caption {
  display: flex;
  align-items: center;
  gap: 7px;
  height: 58px;
  padding: 0 7px;
  border-top: 1px solid #e3e3e3;
  background: #f9f9f9;
  font-weight: 500;
  line-height: 19px;
}
.scroll {
  flex: none;
  width: 11px;
  display: flex;
  flex-direction: column;
  align-items: center;
  padding: 5px 0;
  background: #fcfcfc;
  fill: #777;
}
.scroll span { width: 7px; height: 64px; margin: 3px 0 auto; background: #8b8b8b; }

/* desktop taskbar */
.taskbar {
  flex: none;
  display: flex;
  height: 40px;
  background: linear-gradient(90deg, #22373f, #1f3140 60%, #1b2a40);
  color: #fff;
  font: 12px/18px Roboto, sans-serif;
}
.taskbar > button, .pinned button { width: 48px; height: 40px; }
.pinned { display: flex; gap: 1px; margin-left: 3px; }
.focused { background: #4e6269; border-bottom: 3px solid #76b9ed; padding-top: 3px; }
.running { background: linear-gradient(#76b9ed, #76b9ed) center bottom / 40px 2px no-repeat; }
.tray { display: flex; align-items: center; gap: 8px; margin-left: auto; }
.tray button { width: 24px; height: 40px; }
.tray time { margin: 0 4px 0 2px; text-align: center; }
.notice { position: relative; }
.notice span {
  position: absolute;
  left: 12px;
  top: 19px;
  width: 16px;
  height: 16px;
  border: 1px solid #888;
  border-radius: 50%;
  background: #333;
  font-size: 11px;
  line-height: 14px;
}
.desktop { width: 5px; height: 40px; border-left: 1px solid #7d8894; margin-left: 6px; }
```
